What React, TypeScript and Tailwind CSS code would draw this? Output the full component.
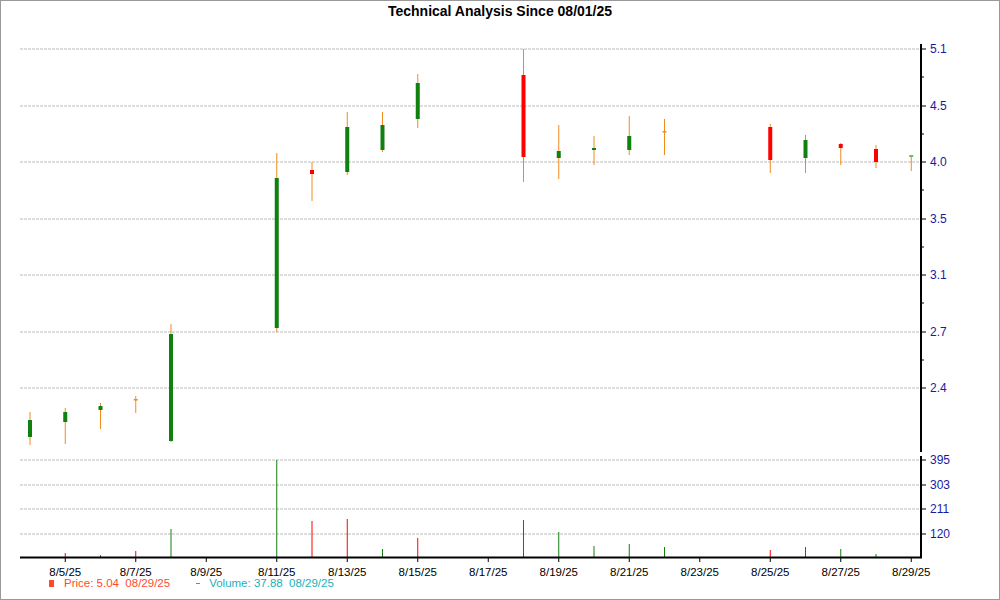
const dayX = (d: number) => 30 + (d - 4) * 35.25

type Candle = [number, number, number, number, number, string]
// day, high, low, bodyTop, bodyBottom, color
const candles: Candle[] = [
  [4, 412, 445, 420, 437, "#108010"],
  [5, 408, 444, 412, 422, "#108010"],
  [6, 403, 429, 406, 410, "#108010"],
  [7, 396, 413, 399, 400, "#f08c1e"],
  [8, 324, 442, 334, 441, "#108010"],
  [11, 153, 332, 178, 328, "#108010"],
  [12, 162, 201, 170, 174, "#ff0000"],
  [13, 112, 175, 127, 172, "#108010"],
  [14, 112, 152, 125, 150, "#108010"],
  [15, 74, 128, 83, 119, "#108010"],
  [18, 49, 182, 75, 157, "#ff0000"],
  [19, 125, 179, 151, 158, "#108010"],
  [20, 136, 165, 148, 150, "#108010"],
  [21, 116, 155, 136, 150, "#108010"],
  [22, 119, 155, 131, 132, "#f08c1e"],
  [25, 124, 173, 127, 160, "#ff0000"],
  [26, 135, 173, 140, 158, "#108010"],
  [27, 143, 165, 144, 148, "#ff0000"],
  [28, 145, 168, 149, 162, "#ff0000"],
  [29, 155, 171, 155, 157, "#66bb66"],
]

const volumes: [number, number, string][] = [
  [5, 553, "#ff0000"], [6, 555, "#108010"], [7, 551, "#ff0000"], [8, 529, "#108010"],
  [11, 460, "#108010"], [12, 521, "#ff0000"], [13, 519, "#ff0000"], [14, 549, "#108010"],
  [15, 538, "#ff0000"], [18, 520, "#108010"], [19, 532, "#108010"], [20, 546, "#108010"],
  [21, 544, "#108010"], [22, 547, "#108010"], [25, 550, "#ff0000"], [26, 547, "#108010"],
  [27, 549, "#108010"], [28, 554, "#108010"],
]

const priceTicks: [number, string][] = [
  [49, "5.1"], [106, "4.5"], [162, "4.0"], [219, "3.5"], [275, "3.1"], [332, "2.7"], [388, "2.4"],
]
const volTicks: [number, string][] = [[460, "395"], [485, "303"], [509, "211"], [534, "120"]]
const dates = [5, 7, 9, 11, 13, 15, 17, 19, 21, 23, 25, 27, 29]

export default function App() {
  return (
    <div
      className="w-[1000px] h-[600px] border border-[#999] bg-white flex flex-col overflow-hidden"
      style={{ fontFamily: '"Liberation Sans", Arial, sans-serif' }}
    >
      <div className="h-[21px] flex items-end justify-center text-[14px] font-bold text-black">
        Technical Analysis Since 08/01/25
      </div>
      <svg width={998} height={556} viewBox="1 22 998 556" className="block">
        {priceTicks.map(([y]) => (
          <line key={y} x1={20} x2={921} y1={y} y2={y} stroke="#bbb" strokeDasharray="3 1" />
        ))}
        {volTicks.map(([y]) => (
          <line key={y} x1={20} x2={921} y1={y} y2={y} stroke="#bbb" strokeDasharray="3 1" />
        ))}
        {/* right axes */}
        <line x1={921} x2={921} y1={44} y2={452} stroke="#000" strokeWidth={2} />
        <line x1={921} x2={921} y1={456} y2={558} stroke="#000" strokeWidth={2} />
        {priceTicks.map(([y, l], i) => (
          <g key={l}>
            <line x1={921} x2={926} y1={y} y2={y} stroke="#000" />
            {i < priceTicks.length - 1 && (
              <line x1={921} x2={924} y1={y + 28} y2={y + 28} stroke="#000" />
            )}
            <text x={930} y={y + 4} fontSize={12} fill="#1a1aa0">{l}</text>
          </g>
        ))}
        {volTicks.map(([y, l]) => (
          <g key={l}>
            <line x1={921} x2={926} y1={y} y2={y} stroke="#000" />
            <text x={930} y={y + 4} fontSize={12} fill="#1a1aa0">{l}</text>
          </g>
        ))}
        {candles.map(([d, h, lo, t, b, c]) => {
          const x = dayX(d)
          return (
            <g key={d}>
              <line x1={x} x2={x} y1={h} y2={lo} stroke="#f08c1e" />
              <rect x={x - 2} y={t} width={4} height={Math.max(b - t, 1.5)} fill={c} />
            </g>
          )
        })}
        {volumes.map(([d, y, c]) => {
          const x = dayX(d)
          return <line key={d} x1={x} x2={x} y1={y} y2={557} stroke={c} />
        })}
        <line x1={20} x2={922} y1={557.5} y2={557.5} stroke="#000" strokeWidth={2} />
        {dates.map((d) => {
          const x = dayX(d)
          return (
            <g key={d}>
              <line x1={x} x2={x} y1={557} y2={562} stroke="#000" />
              <text x={x} y={576} fontSize={11.5} textAnchor="middle" fill="#000">{`8/${d}/25`}</text>
            </g>
          )
        })}
      </svg>
      <div className="flex items-center gap-[26px] pl-[48px] text-[11.5px] leading-none">
        <span className="flex items-center gap-[10px] text-[#ff4a2a]">
          <span className="w-[5px] h-[7px] bg-[#ff4a2a]" />
          <span>Price: 5.04&nbsp;&nbsp;08/29/25</span>
        </span>
        <span className="flex items-center gap-[9px] text-[#1ab0b8]">
          <span className="w-[4px] h-[1px] bg-[#1ab0b8]" />
          <span>Volume: 37.88&nbsp;&nbsp;08/29/25</span>
        </span>
      </div>
    </div>
  )
}
